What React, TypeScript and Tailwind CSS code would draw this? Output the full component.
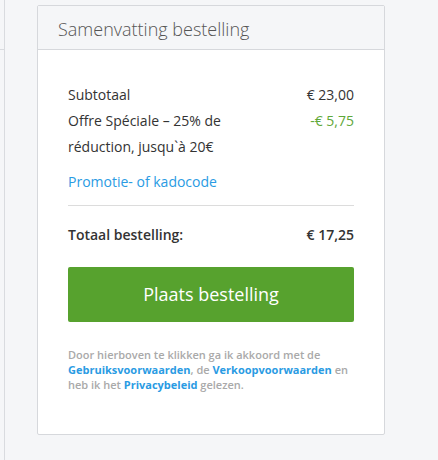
export default function App() {
  return (
    <div
      className="flex w-[438px] h-[460px] bg-[#f5f6f8] overflow-hidden"
      style={{ fontFamily: '"Open Sans", "Noto Sans", sans-serif' }}
    >
      {/* left column, cut off */}
      <div className="w-[5px] shrink-0 border-r border-[#d9dbdf] flex flex-col">
        <div className="h-[50px] border-b border-[#d9dbdf] bg-[#f5f6f8]" />
        <div className="flex-1 bg-[#f5f6f8]" />
      </div>

      <div className="ml-[32px] mt-[5px] w-[348px] h-[430px] shrink-0 border border-[#d6d8dc] rounded-[2px] bg-white flex flex-col">
        <div className="h-[44px] bg-[#f5f6f8] border-b border-[#d6d8dc] px-[20px] flex items-center">
          <h2 className="text-[18px] font-light text-[#555] leading-none pt-[2px]">Samenvatting bestelling</h2>
        </div>

        <div className="px-[30px] pt-[31px] text-[14px] text-[#333]">
          <div className="flex justify-between leading-[27px]">
            <span>Subtotaal</span>
            <span>€ 23,00</span>
          </div>
          <div className="flex justify-between leading-[26px]">
            <span className="w-[170px]">Offre Spéciale – 25% de réduction, jusqu`à 20€</span>
            <span className="text-[#5fa83a]">-€ 5,75</span>
          </div>
          <a href="#" className="block mt-[9px] leading-[26px] text-[#2a9be3]">
            Promotie- of kadocode
          </a>
          <div className="mt-[10px] border-t border-[#dcdcdc]" />
          <div className="flex justify-between pt-[16px] leading-[26px] font-semibold">
            <span>Totaal bestelling:</span>
            <span>€ 17,25</span>
          </div>
          <button className="mt-[19px] w-full h-[55px] bg-[#57a22e] rounded-[2px] text-white text-[18px] font-normal">
            Plaats bestelling
          </button>
          <p className="mt-[25px] text-[11px] leading-[15px] font-semibold text-[#a9a9a9]">
            Door hierboven te klikken ga ik akkoord met de{' '}
            <a href="#" className="text-[#2a9be3] font-bold">Gebruiksvoorwaarden</a>, de{' '}
            <a href="#" className="text-[#2a9be3] font-bold">Verkoopvoorwaarden</a> en heb ik het{' '}
            <a href="#" className="text-[#2a9be3] font-bold">Privacybeleid</a> gelezen.
          </p>
        </div>
      </div>
    </div>
  )
}
